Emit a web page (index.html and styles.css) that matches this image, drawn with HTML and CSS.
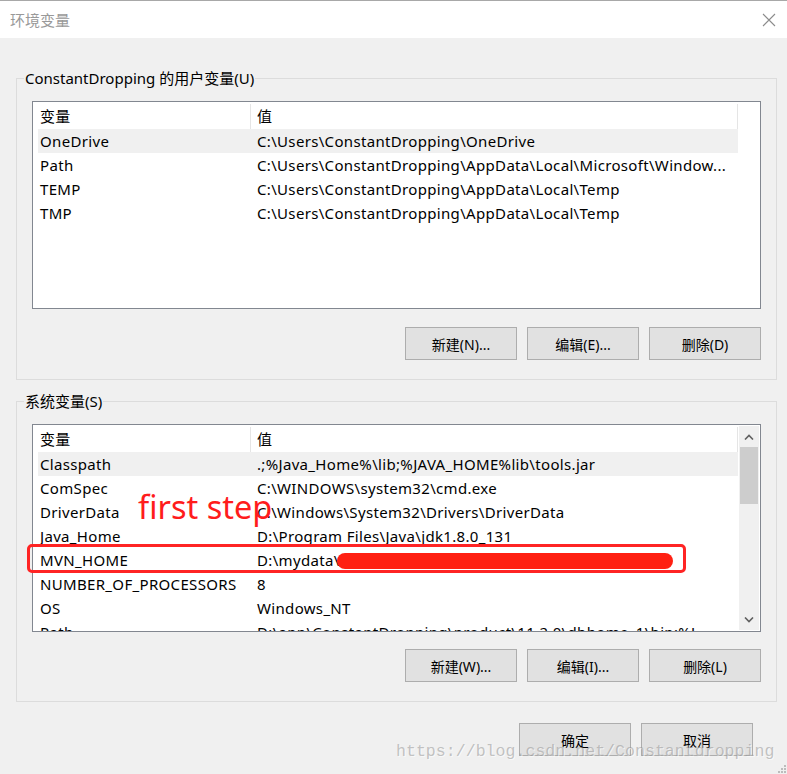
FILE: index.html
```html
<!DOCTYPE html>
<html lang="zh-CN">
<head>
  <meta charset="UTF-8">
  <meta name="viewport" content="width=device-width, initial-scale=1.0">
  <title>环境变量</title>
  <link rel="stylesheet" href="styles.css">
</head>
<body>
  <div class="titlebar">
    <span class="title">环境变量</span>
    <svg class="close" width="14" height="14" viewBox="0 0 14 14">
      <path d="M1 1L13 13M13 1L1 13" stroke="#8c8c8c" stroke-width="1.1" fill="none"/>
    </svg>
  </div>

  <fieldset class="group group-user">
    <legend>ConstantDropping 的用户变量(U)</legend>
    <div class="list">
      <div class="list-body">
        <div class="row head">
          <div class="cell name">变量</div>
          <div class="cell value">值</div>
        </div>
        <div class="row selected">
          <div class="cell name">OneDrive</div>
          <div class="cell value">C:\Users\ConstantDropping\OneDrive</div>
        </div>
        <div class="row">
          <div class="cell name">Path</div>
          <div class="cell value">C:\Users\ConstantDropping\AppData\Local\Microsoft\Window...</div>
        </div>
        <div class="row">
          <div class="cell name">TEMP</div>
          <div class="cell value">C:\Users\ConstantDropping\AppData\Local\Temp</div>
        </div>
        <div class="row">
          <div class="cell name">TMP</div>
          <div class="cell value">C:\Users\ConstantDropping\AppData\Local\Temp</div>
        </div>
      </div>
    </div>
    <div class="buttons">
      <button>新建(N)...</button>
      <button>编辑(E)...</button>
      <button>删除(D)</button>
    </div>
  </fieldset>

  <fieldset class="group group-system">
    <legend>系统变量(S)</legend>
    <div class="list">
      <div class="list-body">
        <div class="row head">
          <div class="cell name">变量</div>
          <div class="cell value">值</div>
        </div>
        <div class="row selected">
          <div class="cell name">Classpath</div>
          <div class="cell value">.;%Java_Home%\lib;%JAVA_HOME%lib\tools.jar</div>
        </div>
        <div class="row">
          <div class="cell name">ComSpec</div>
          <div class="cell value">C:\WINDOWS\system32\cmd.exe</div>
        </div>
        <div class="row">
          <div class="cell name">DriverData</div>
          <div class="cell value">C:\Windows\System32\Drivers\DriverData</div>
        </div>
        <div class="row">
          <div class="cell name">Java_Home</div>
          <div class="cell value">D:\Program Files\Java\jdk1.8.0_131</div>
        </div>
        <div class="row">
          <div class="cell name">MVN_HOME</div>
          <div class="cell value">D:\mydata\</div>
        </div>
        <div class="row">
          <div class="cell name">NUMBER_OF_PROCESSORS</div>
          <div class="cell value">8</div>
        </div>
        <div class="row">
          <div class="cell name">OS</div>
          <div class="cell value">Windows_NT</div>
        </div>
        <div class="row">
          <div class="cell name">Path</div>
          <div class="cell value">D:\app\ConstantDropping\product\11.2.0\dbhome_1\bin;%J</div>
        </div>
      </div>
      <div class="scrollbar">
        <div class="arrow">
          <svg width="10" height="6" viewBox="0 0 10 6"><path d="M1 5.5L5 1.5L9 5.5" stroke="#606060" stroke-width="1.6" fill="none"/></svg>
        </div>
        <div class="thumb"></div>
        <div class="track"></div>
        <div class="arrow">
          <svg width="10" height="6" viewBox="0 0 10 6"><path d="M1 0.5L5 4.5L9 0.5" stroke="#606060" stroke-width="1.6" fill="none"/></svg>
        </div>
      </div>
    </div>
    <div class="buttons">
      <button>新建(W)...</button>
      <button>编辑(I)...</button>
      <button>删除(L)</button>
    </div>
  </fieldset>

  <div class="dialog-buttons">
    <button>确定</button>
    <button>取消</button>
  </div>

  <!-- 截图上的标注 -->
  <div class="note">first step</div>
  <div class="mark-box"></div>
  <div class="mark-blob"></div>
  <div class="watermark">https://blog.csdn.net/Constantdropping</div>
  <svg class="grip" width="8" height="8" viewBox="0 0 8 8">
    <rect x="6" y="0" width="2" height="2" fill="#bcbcbc"/>
    <rect x="3" y="3" width="2" height="2" fill="#bcbcbc"/>
    <rect x="6" y="3" width="2" height="2" fill="#bcbcbc"/>
    <rect x="0" y="6" width="2" height="2" fill="#bcbcbc"/>
    <rect x="3" y="6" width="2" height="2" fill="#bcbcbc"/>
    <rect x="6" y="6" width="2" height="2" fill="#bcbcbc"/>
  </svg>
</body>
</html>
```

FILE: styles.css
```css
body {
  margin: 0;
  width: 787px;
  height: 774px;
  overflow: hidden;
  position: relative;
  background-color: #f0f0f0;
  font-family: "Noto Sans", "Noto Sans CJK SC", sans-serif;
  font-size: 15px;
  color: #000;
}
.titlebar {
  display: flex;
  align-items: center;
  justify-content: space-between;
  height: 37px;
  padding: 0 11px 0 10px;
  background: #fff;
  border-top: 1px solid #a8a8a8;
}
.title {
  color: #999;
  font-size: 15px;
}
.group {
  margin: 30px 10px 0 16px;
  padding: 0 15px 19px;
  border: 1px solid #dcdcdc;
  min-width: 0;
}
.group-system {
  margin-top: 11px;
}
.group legend {
  margin-left: -8px;
  padding: 0 1px;
  line-height: 20px;
}
.list {
  display: flex;
  box-sizing: border-box;
  height: 208px;
  margin-top: 13px;
  border: 1px solid #828790;
  background: #fff;
}
.list-body {
  width: 700px;
  margin-left: 5px;
  padding-top: 2px;
  overflow: hidden;
  letter-spacing: 0.33px;
}
.row {
  display: grid;
  grid-template-columns: 213px 487px;
  height: 24px;
  line-height: 24px;
}
.row.head {
  height: 25px;
  line-height: 25px;
}
.row.selected {
  background: #f0f0f0;
}
.cell {
  white-space: nowrap;
  overflow: hidden;
  text-overflow: ellipsis;
}
.cell.name {
  padding-left: 2px;
}
.cell.value {
  padding-left: 6px;
}
.head .cell {
  border-right: 1px solid #e5e5e5;
}
.scrollbar {
  display: flex;
  flex-direction: column;
  width: 20px;
  margin: 1px 1px 1px auto;
  background: #f0f0f0;
}
.arrow {
  display: flex;
  align-items: center;
  justify-content: center;
  height: 21px;
}
.thumb {
  height: 57px;
  margin: 0 1px;
  background: #cdcdcd;
}
.track {
  flex: 1;
}
.buttons {
  display: flex;
  justify-content: flex-end;
  gap: 10px;
  margin-top: 18px;
}
.group-system .buttons {
  margin-top: 17px;
}
button {
  width: 112px;
  height: 33px;
  padding: 0;
  border: 1px solid #adadad;
  background: #e1e1e1;
  font-family: "Noto Sans", "Noto Sans CJK SC", sans-serif;
  font-size: 14px;
  color: #000;
}
.dialog-buttons {
  display: flex;
  justify-content: flex-end;
  gap: 10px;
  margin-top: 21px;
  padding-right: 34px;
}
.note {
  position: absolute;
  left: 138px;
  top: 487px;
  color: #ff1c1c;
  font-size: 32.5px;
  line-height: 40px;
}
.mark-box {
  position: absolute;
  left: 27px;
  top: 544px;
  width: 653px;
  height: 23px;
  border: 3px solid #ff2424;
  border-radius: 5px;
}
.mark-blob {
  position: absolute;
  left: 337px;
  top: 553px;
  width: 336px;
  height: 16px;
  border-radius: 8px;
  background: #ff2012;
}
.watermark {
  position: absolute;
  left: 396px;
  top: 742px;
  font-family: "Liberation Mono", monospace;
  font-size: 16.6px;
  color: rgba(150, 150, 150, 0.55);
  text-shadow: 1px 1px 0 rgba(255, 255, 255, 0.6);
}
.grip {
  position: absolute;
  right: 1px;
  bottom: 1px;
}
```
